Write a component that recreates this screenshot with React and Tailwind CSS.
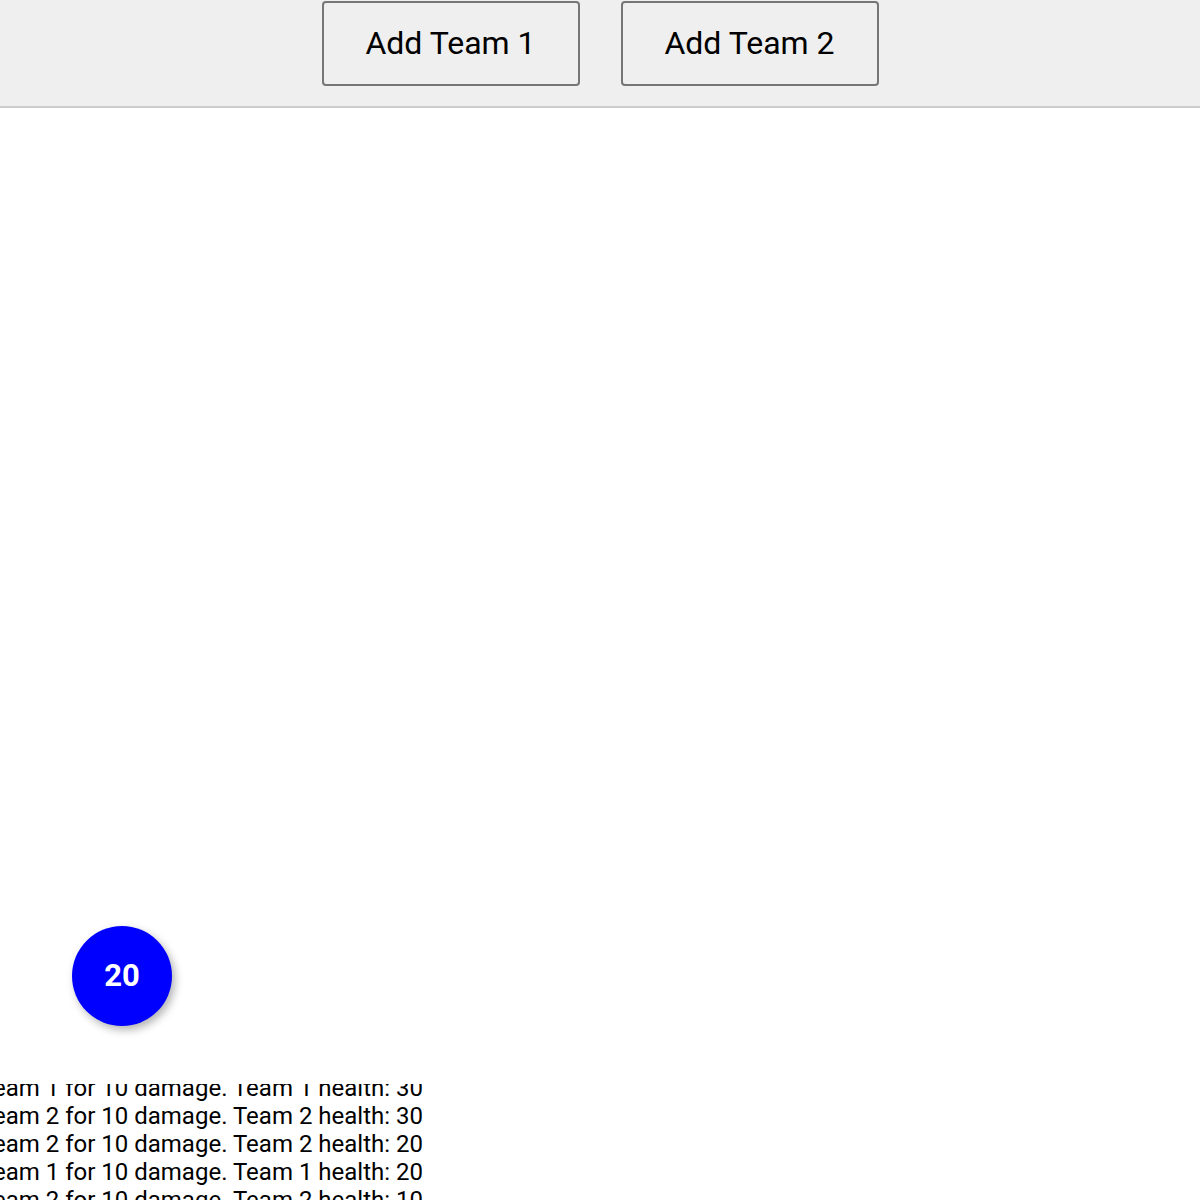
export default function App() {
  const log = [
    { attacker: 2, target: 1, health: 30 },
    { attacker: 1, target: 2, health: 30 },
    { attacker: 1, target: 2, health: 20 },
    { attacker: 2, target: 1, health: 20 },
    { attacker: 1, target: 2, health: 10 },
  ];

  return (
    <div
      className="w-[1200px] h-[1200px] overflow-hidden bg-white text-black flex flex-col"
      style={{ fontFamily: "Roboto, 'Noto Sans', sans-serif" }}
    >
      {/* toolbar */}
      <div className="h-[108px] shrink-0 bg-[#efefef] border-b-2 border-[#cccccc] flex justify-center items-start gap-[41px] pt-[1px]">
        <button className="w-[258px] h-[85px] border-2 border-[#767676] rounded-[4px] bg-[#efefef] text-[32px] leading-none text-black pb-[2px]">
          Add Team 1
        </button>
        <button className="w-[258px] h-[85px] border-2 border-[#767676] rounded-[4px] bg-[#efefef] text-[32px] leading-none text-black pb-[2px]">
          Add Team 2
        </button>
      </div>

      {/* arena */}
      <div className="relative h-[976px] shrink-0">
        <div className="absolute left-[72px] top-[818px] w-[100px] h-[100px] rounded-full bg-[#0000ff] shadow-[3px_4px_8px_rgba(0,0,0,0.3)] flex items-center justify-center text-white font-bold text-[31px]">
          20
        </div>
      </div>

      {/* battle log */}
      <div className="h-[116px] w-[423px] overflow-hidden shrink-0">
        <div className="mt-[-10px] flex flex-col items-end">
          {log.map((e, i) => (
            <div key={i} className="whitespace-nowrap text-[24px] leading-[28px] shrink-0">
              Team {e.attacker} attacks Team {e.target} for 10 damage. Team {e.target} health: {e.health}
            </div>
          ))}
        </div>
      </div>
    </div>
  );
}
